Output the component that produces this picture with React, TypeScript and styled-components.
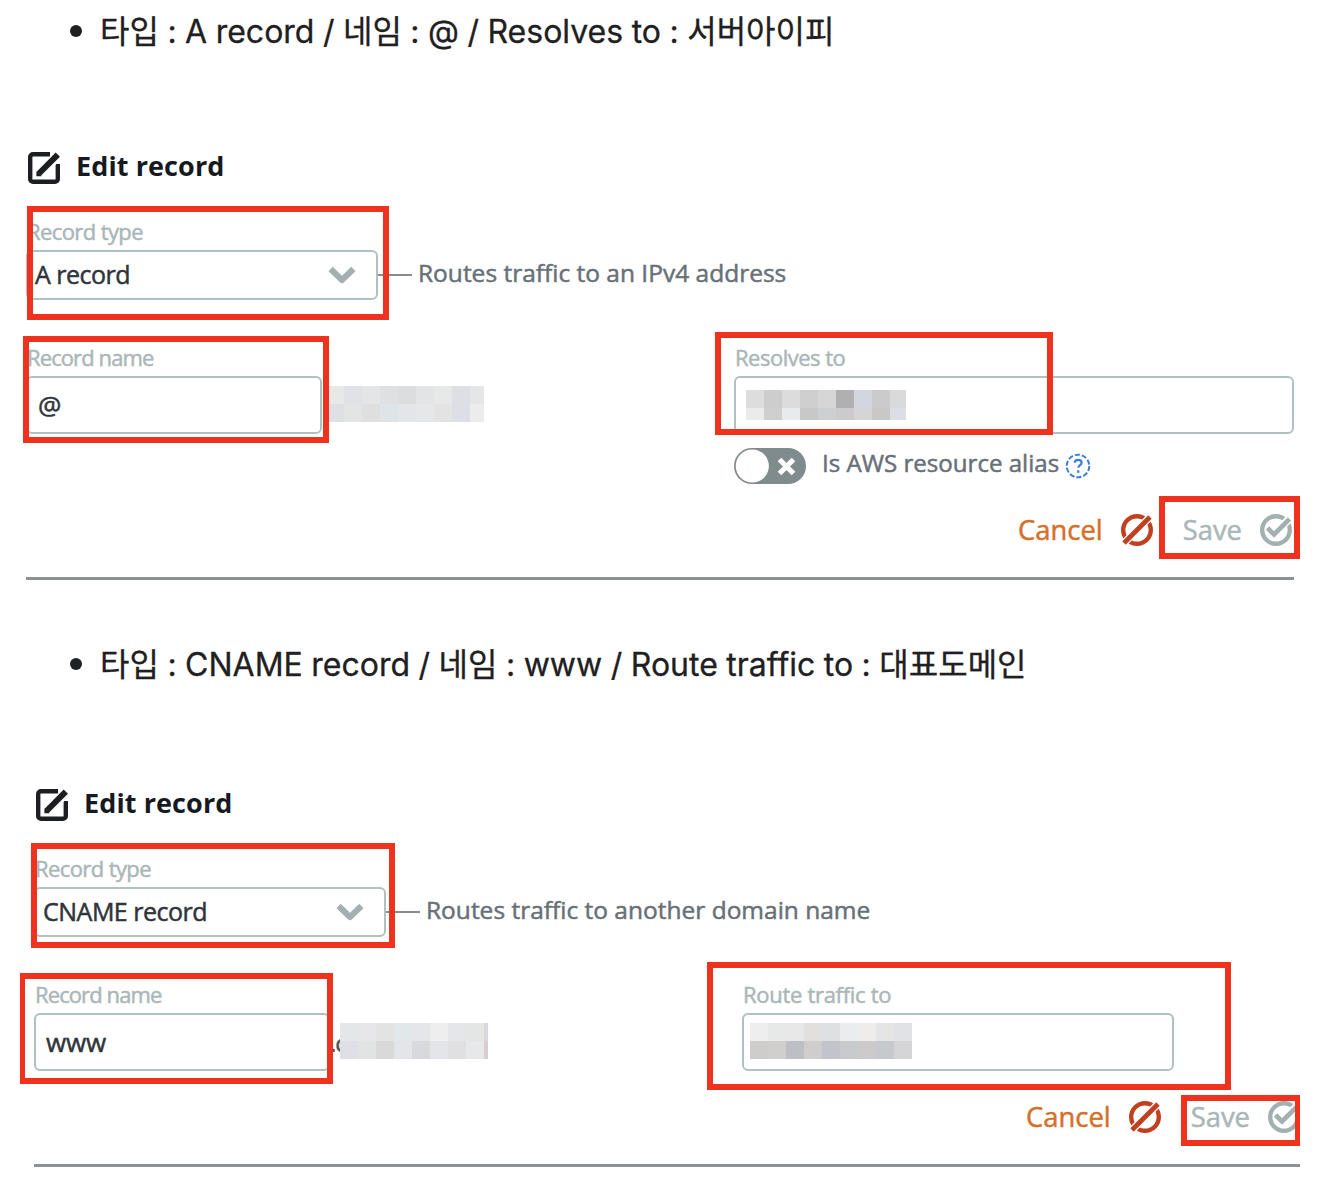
import React from 'react';
import styled, { createGlobalStyle } from 'styled-components';

interface BoxProps {
  $x: number;
  $y: number;
  $w: number;
  $h: number;
}

interface MosaicData {
  cell: string;
  rows: string;
  colors: string[];
}

const nameMosaicA: MosaicData = {
  cell: '18px 18px 18px 18px 18px 18px 18px 18px 14px',
  rows: '18px 18px',
  colors: [
    '#e7e9e8', '#e0e2e7', '#e4e5e7', '#dfe0e1', '#dcddde', '#e3e4e5', '#e7e9e8', '#dddfe5', '#e5e6e8',
    '#dfe0e3', '#e3e5e4', '#dfdfdf', '#dfe4e9', '#e4e5e8', '#e6e7e9', '#e3e3e3', '#dddfe6', '#ececed',
  ],
};

const valueMosaicA: MosaicData = {
  cell: '18px 18px 18px 18px 18px 18px 18px 18px 16px',
  rows: '18px 12px',
  colors: [
    '#dcdedd', '#cdcdce', '#dcdcdd', '#cfcfd0', '#d6d6d7', '#b0b0b2', '#d3d6dd', '#cbcbcc', '#d9dadc',
    '#ebebeb', '#cfcfd0', '#e9eaec', '#c8c8c9', '#cecfd2', '#cdcace', '#d5d5d7', '#cac8c6', '#dbdee5',
  ],
};

const nameMosaicB: MosaicData = {
  cell: '18px 18px 18px 18px 18px 18px 18px 18px 4px',
  rows: '18px 18px',
  colors: [
    '#e5e6e8', '#e7e7e9', '#e3e3e3', '#e2e7ea', '#e5e6e9', '#eeeeee', '#e5e6e9', '#e4e6e5', '#d9d8de',
    '#dfe0e5', '#e2e3e3', '#d9d9d9', '#e4e5e8', '#d8d9de', '#e4e5e8', '#e0e0e2', '#e7e8e9', '#d8cdd0',
  ],
};

const valueMosaicB: MosaicData = {
  cell: 'repeat(9, 18px)',
  rows: '18px 18px',
  colors: [
    '#eeeeee', '#e7e9e8', '#e8e8e8', '#e1e0de', '#dee0e2', '#ebecee', '#eeedeb', '#e5e5e5', '#e1e2e6',
    '#cfcdcc', '#d1cfce', '#bebfc4', '#d0cecd', '#c3c4cb', '#c9cacc', '#cdcacc', '#c6c9cd', '#d5d5d7',
  ],
};

const Mosaic = ({ data }: { data: MosaicData }) => (
  <MosaicGrid $cell={data.cell} $rows={data.rows}>
    {data.colors.map((color, i) => <MosaicCell key={i} $color={color} />)}
  </MosaicGrid>
);

const EditIcon = () => (
  <svg width="34" height="34" viewBox="-1 -1 34 34" fill="none" stroke="#1c1e22">
    <path d="M22 2.2H5a2.8 2.8 0 0 0-2.8 2.8v22a2.8 2.8 0 0 0 2.8 2.8h22a2.8 2.8 0 0 0 2.8-2.8V12" strokeWidth="4.4" />
    <path d="M18 16L32 2" stroke="#fff" strokeWidth="9" />
    <path d="M11 21.5L29.8 2.7" strokeWidth="6" />
    <path d="M9.2 19.4v4h4" strokeWidth="1.6" fill="#1c1e22" />
  </svg>
);

const ChevronIcon = () => (
  <svg width="28" height="18" viewBox="0 0 28 18" fill="none" stroke="#a3afb0" strokeWidth="6">
    <path d="M2.6 3L14 14L25.4 3" strokeLinejoin="round" />
  </svg>
);

const CancelIcon = () => (
  <svg width="32" height="32" viewBox="0 0 32 32" fill="none">
    <circle cx="16" cy="16" r="13.8" stroke="#c1401f" strokeWidth="4.4" />
    <path d="M1 31L31 1" stroke="#fff" strokeWidth="7.5" />
    <path d="M3 29L29 3" stroke="#c1401f" strokeWidth="4.8" />
  </svg>
);

const SaveIcon = () => (
  <svg width="32" height="32" viewBox="0 0 32 32" fill="none">
    <circle cx="16" cy="16" r="13.8" stroke="#a2b0b1" strokeWidth="4.4" />
    <path d="M14 20L31 3" stroke="#fff" strokeWidth="8" />
    <path d="M7.5 14L14 20.5L29.5 5" stroke="#a2b0b1" strokeWidth="4.6" />
  </svg>
);

const HelpIcon = () => (
  <svg width="26" height="26" viewBox="0 0 26 26" fill="none" stroke="#3b7fd9">
    <circle cx="13" cy="13" r="11.3" strokeWidth="2" strokeDasharray="5.1 2" />
    <path d="M9.8 9.8c0-3.9 6.8-3.9 6.8 0c0 2.4-3.3 2.4-3.3 5" strokeWidth="2.2" />
    <path d="M13.2 17.2v2.6" strokeWidth="2.2" />
  </svg>
);

const Toggle = () => (
  <svg width="72" height="36" viewBox="0 0 72 36">
    <rect width="72" height="36" rx="18" fill="#7f8b8c" />
    <circle cx="18.3" cy="18" r="16.6" fill="#fff" />
    <path d="M45.5 11.5L59.5 25.5M59.5 11.5L45.5 25.5" stroke="#fff" strokeWidth="5.2" />
  </svg>
);

interface RecordProps {
  type: string;
  description: string;
  name: string;
  suffix?: string;
  nameMosaic: MosaicData;
  valueLabel: string;
  valueLabelSpacing?: number;
  valueMosaic: MosaicData;
  valueWidth: number;
  alias?: boolean;
  shift?: number;
  children: React.ReactNode;
}

const EditRecord = ({
  type, description, name, suffix, nameMosaic,
  valueLabel, valueLabelSpacing = -0.5, valueMosaic, valueWidth, alias, shift = 0, children,
}: RecordProps) => (
  <Figure>
    <Form $shift={shift}>
      <Heading>
        <EditIcon />
        <Title>Edit record</Title>
      </Heading>
      <Label $spacing={-0.6}>Record type</Label>
      <TypeRow>
        <Select>
          <FieldText>{type}</FieldText>
          <ChevronIcon />
        </Select>
        <Dash />
        <Description>{description}</Description>
      </TypeRow>
      <Columns>
        <div>
          <Label $spacing={-0.9}>Record name</Label>
          <NameRow>
            <Input $width={296}><NameText>{name}</NameText></Input>
            {suffix && <Suffix>{suffix}</Suffix>}
            <SuffixMosaic $indent={suffix ? 2 : 4}><Mosaic data={nameMosaic} /></SuffixMosaic>
          </NameRow>
        </div>
        <div>
          <Label $spacing={valueLabelSpacing}>{valueLabel}</Label>
          <Input $width={valueWidth} $tight={!alias}><Mosaic data={valueMosaic} /></Input>
          {alias && (
            <AliasRow>
              <Toggle />
              <AliasText>Is AWS resource alias</AliasText>
              <HelpIcon />
            </AliasRow>
          )}
        </div>
      </Columns>
      <Actions>
        <Action $color="#d5702a">Cancel</Action>
        <CancelIcon />
        <SaveText $color="#aab7b8">Save</SaveText>
        <SaveIcon />
      </Actions>
    </Form>
    {children}
  </Figure>
);

const App = () => (
  <Page>
    <GlobalStyle />
    <List $height={130} $top={8}>
      <Item>타입 : A record / 네임 : @ / Resolves to : 서버아이피</Item>
    </List>
    <EditRecord
      type="A record"
      description="Routes traffic to an IPv4 address"
      name="@"
      nameMosaic={nameMosaicA}
      valueLabel="Resolves to"
      valueMosaic={valueMosaicA}
      valueWidth={560}
      alias
    >
      <Highlight $x={7} $y={76} $w={362} $h={114} />
      <Highlight $x={3} $y={206} $w={306} $h={107} />
      <Highlight $x={695} $y={202} $w={338} $h={103} />
      <Highlight $x={1139} $y={366} $w={141} $h={63} />
    </EditRecord>
    <List $height={187} $top={61}>
      <Item>타입 : CNAME record / 네임 : www / Route traffic to : 대표도메인</Item>
    </List>
    <EditRecord
      type="CNAME record"
      description="Routes traffic to another domain name"
      name="www"
      suffix=".c"
      nameMosaic={nameMosaicB}
      valueLabel="Route traffic to"
      valueLabelSpacing={-0.3}
      valueMosaic={valueMosaicB}
      valueWidth={432}
      shift={8}
    >
      <Highlight $x={11} $y={76} $w={364} $h={105} />
      <Highlight $x={-1} $y={206} $w={314} $h={111} />
      <Highlight $x={687} $y={195} $w={524} $h={128} />
      <Highlight $x={1161} $y={328} $w={120} $h={51} />
    </EditRecord>
  </Page>
);

const GlobalStyle = createGlobalStyle`
  * {
    box-sizing: border-box;
  }
  body {
    margin: 0;
    background: #fff;
  }
  svg {
    display: block;
    flex: none;
  }
`;

const Page = styled.main`
  width: 1336px;
  height: 1186px;
  overflow: hidden;
  font-family: "Open Sans", "Noto Sans", sans-serif;
  white-space: nowrap;
`;

const List = styled.ul<{ $height: number; $top: number }>`
  height: ${({ $height }) => $height}px;
  margin: 0;
  padding: ${({ $top }) => $top}px 0 0 70px;
  list-style: none;
`;

const Item = styled.li`
  display: flex;
  align-items: center;
  height: 42px;
  color: #1f2022;
  font-family: Inter, "Noto Sans CJK KR", sans-serif;
  font-size: 32px;
  word-spacing: -0.5px;
  -webkit-text-stroke: 0.3px;

  &::before {
    content: "";
    width: 12px;
    height: 12px;
    margin: 4px 18px 0 0;
    border-radius: 50%;
    background: #1f2022;
  }
`;

const Figure = styled.section`
  position: relative;
  width: 1280px;
  margin-left: 20px;
  overflow: hidden;
  -webkit-text-stroke: 0.5px;
`;

const Form = styled.div<{ $shift: number }>`
  width: 1268px;
  margin-left: ${({ $shift }) => 6 + $shift}px;
  padding-top: 21px;
`;

const Heading = styled.header`
  display: flex;
  align-items: center;
  gap: 15px;
  height: 34px;
  margin: 0 0 33px 1px;
`;

const Title = styled.h2`
  margin: -6px 0 0;
  color: #16191f;
  font-size: 27px;
  font-weight: 700;
  letter-spacing: 0.1px;
  -webkit-text-stroke: 0;
`;

const Label = styled.div<{ $spacing: number }>`
  height: 32px;
  padding-left: 1px;
  color: #aab7b8;
  font-size: 22px;
  line-height: 26px;
  letter-spacing: ${({ $spacing }) => $spacing}px;
`;

const TypeRow = styled.div`
  display: flex;
  align-items: center;
  height: 50px;
`;

const Select = styled.div`
  display: flex;
  align-items: center;
  justify-content: space-between;
  width: 352px;
  height: 50px;
  padding: 0 20px 0 7px;
  border: 2px solid #b3c0c1;
  border-radius: 6px;
`;

const FieldText = styled.span`
  margin-top: -2px;
  color: #30343b;
  font-size: 25px;
  line-height: 34px;
  letter-spacing: -0.5px;
`;

const NameText = styled(FieldText)`
  margin-top: 0;
  font-size: 26px;
  letter-spacing: -0.1px;
`;

const Dash = styled.span`
  width: 34px;
  height: 2px;
  margin-right: 6px;
  background: #878c90;
`;

const Description = styled.span`
  margin-top: -5px;
  color: #687078;
  font-size: 24.5px;
`;

const Columns = styled.div`
  display: grid;
  grid-template-columns: 708px auto;
  margin-top: 44px;
`;

const NameRow = styled.div`
  display: flex;
  align-items: center;
`;

const Input = styled.div<{ $width: number; $tight?: boolean }>`
  display: flex;
  align-items: center;
  width: ${({ $width }) => $width}px;
  height: 58px;
  padding-left: ${({ $tight }) => $tight ? 6 : 10}px;
  padding-bottom: ${({ $tight }) => $tight ? 2 : 0}px;
  border: 2px solid #b3c0c1;
  border-radius: 6px;
`;

const Suffix = styled.span`
  width: 8px;
  color: #4b5058;
  font-size: 24px;
  letter-spacing: -1px;
`;

const SuffixMosaic = styled.div<{ $indent: number }>`
  position: relative;
  margin: -2px 0 0 ${({ $indent }) => $indent}px;
`;

const MosaicGrid = styled.div<{ $cell: string; $rows: string }>`
  display: grid;
  grid-template-columns: ${({ $cell }) => $cell};
  grid-template-rows: ${({ $rows }) => $rows};
`;

const MosaicCell = styled.i<{ $color: string }>`
  background: ${({ $color }) => $color};
`;

const AliasRow = styled.div`
  display: flex;
  align-items: center;
  height: 36px;
  margin-top: 14px;
`;

const AliasText = styled.span`
  width: 240px;
  margin: -7px 3px 0 16px;
  color: #687078;
  font-size: 24.1px;
`;

const Actions = styled.footer`
  display: flex;
  align-items: center;
  justify-content: flex-end;
  height: 96px;
  padding: 0 2px 1px 0;
  border-bottom: 3px solid #8c9196;
`;

const Action = styled.span<{ $color: string }>`
  margin-right: 18px;
  color: ${({ $color }) => $color};
  font-size: 27.4px;
  line-height: 36px;
`;

const SaveText = styled(Action)`
  margin-left: 30px;
`;

// Red annotation frames drawn over the form
const Highlight = styled.div<BoxProps>`
  position: absolute;
  left: ${({ $x }) => $x}px;
  top: ${({ $y }) => $y}px;
  width: ${({ $w }) => $w}px;
  height: ${({ $h }) => $h}px;
  border: 6px solid #ee321d;
`;

export default App;
